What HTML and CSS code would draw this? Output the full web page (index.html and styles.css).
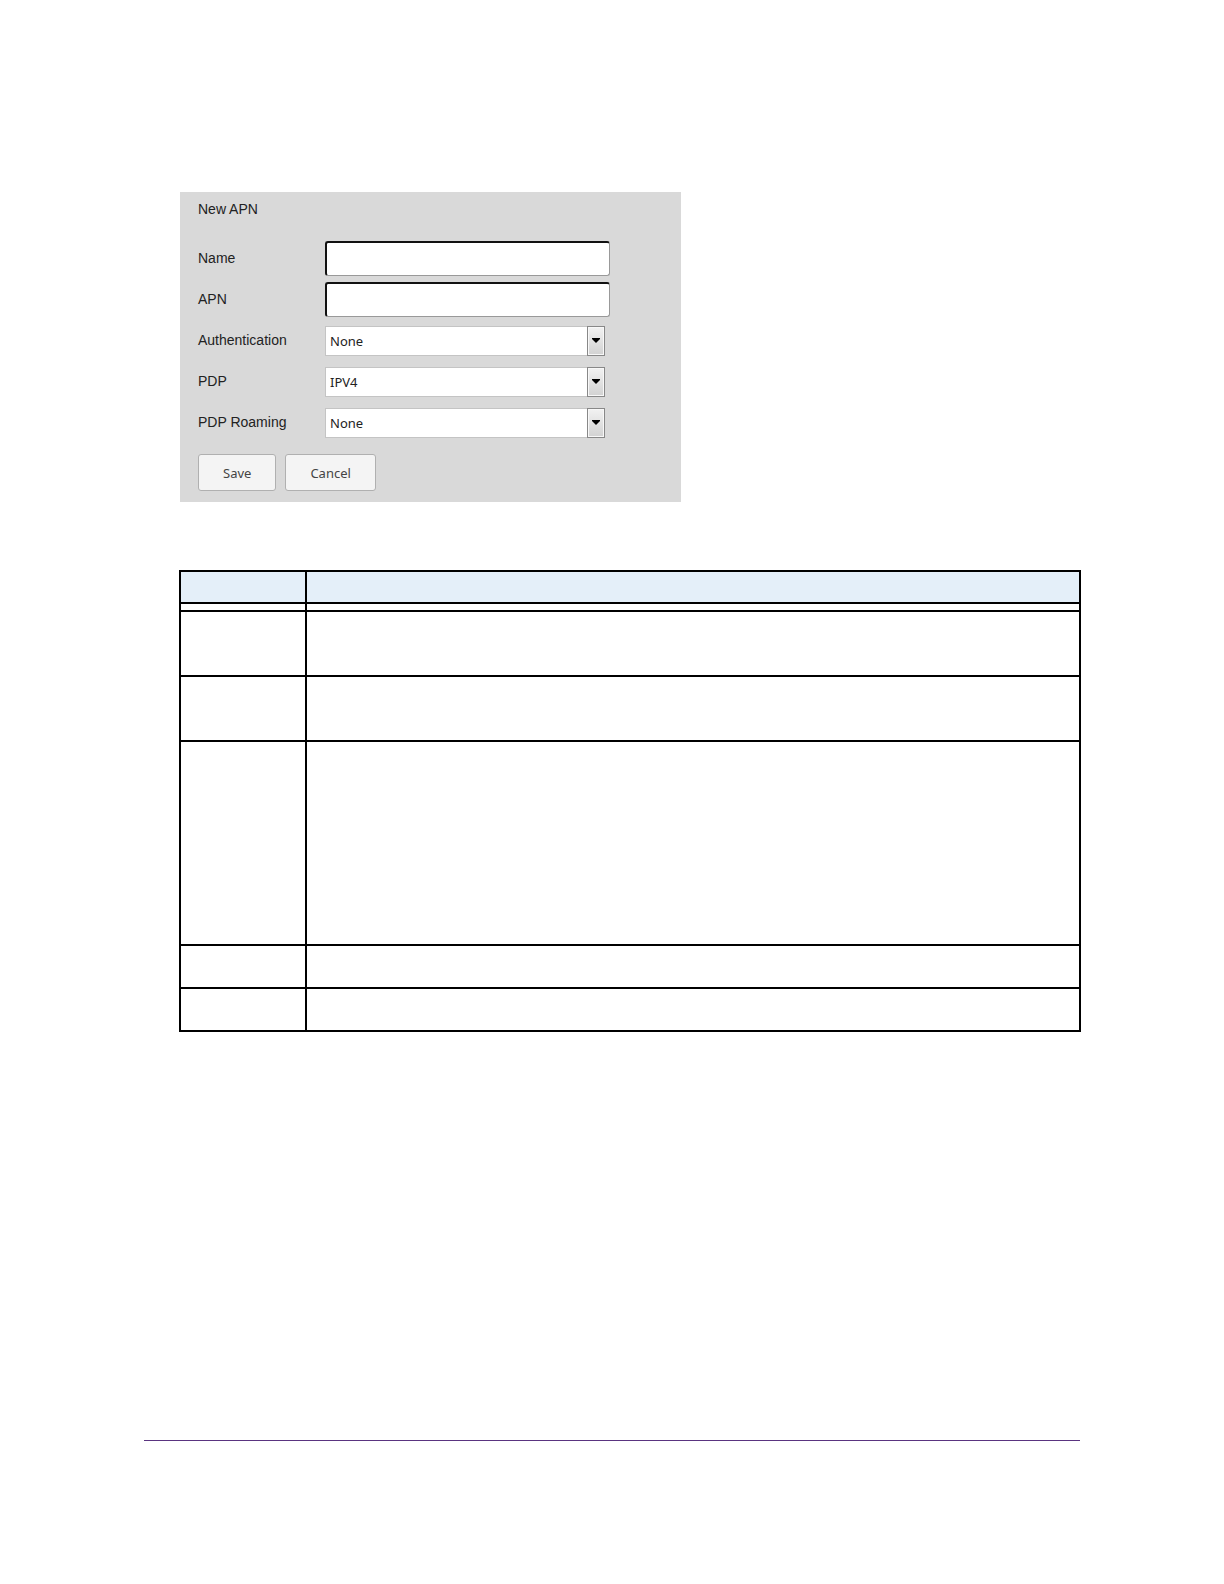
FILE: index.html
```html
<!DOCTYPE html>
<html lang="en">
<head>
    <meta charset="UTF-8">
    <meta name="viewport" content="width=device-width, initial-scale=1.0">
    <title>New APN</title>
    <link rel="stylesheet" href="styles.css">
</head>
<body>

<div class="page">
    <form class="panel">
        <h1>New APN</h1>

        <div class="row">
            <label for="name">Name</label>
            <input type="text" id="name">
        </div>
        <div class="row">
            <label for="apn">APN</label>
            <input type="text" id="apn">
        </div>
        <div class="row">
            <label for="auth">Authentication</label>
            <div class="select">
                <select id="auth">
                    <option>None</option>
                </select>
                <span class="arrow"><svg width="8" height="5" viewBox="0 0 8 5"><path d="M0 0h8v1L4 5 0 1z"/></svg></span>
            </div>
        </div>
        <div class="row">
            <label for="pdp">PDP</label>
            <div class="select">
                <select id="pdp">
                    <option>IPV4</option>
                </select>
                <span class="arrow"><svg width="8" height="5" viewBox="0 0 8 5"><path d="M0 0h8v1L4 5 0 1z"/></svg></span>
            </div>
        </div>
        <div class="row">
            <label for="roaming">PDP Roaming</label>
            <div class="select">
                <select id="roaming">
                    <option>None</option>
                </select>
                <span class="arrow"><svg width="8" height="5" viewBox="0 0 8 5"><path d="M0 0h8v1L4 5 0 1z"/></svg></span>
            </div>
        </div>

        <div class="buttons">
            <button type="button">Save</button>
            <button type="button">Cancel</button>
        </div>
    </form>

    <table class="fields">
        <thead>
            <tr class="head"><th></th><th></th></tr>
            <tr class="gap"><td></td><td></td></tr>
        </thead>
        <tbody>
            <tr class="medium"><td></td><td></td></tr>
            <tr class="medium"><td></td><td></td></tr>
            <tr class="tall"><td></td><td></td></tr>
            <tr class="short"><td></td><td></td></tr>
            <tr class="short"><td></td><td></td></tr>
        </tbody>
    </table>

    <hr>
</div>

</body>
</html>
```
FILE: styles.css
```css
* {
    box-sizing: border-box;
}
body {
    margin: 0;
    background-color: #fff;
    color: #222;
    font-family: "Liberation Sans", Arial, sans-serif;
    font-size: 14px;
}
.page {
    padding: 192px 143px 140px 144px;
}

/* Form */
.panel {
    max-width: 501px;
    margin-left: 36px;
    padding: 8px 18px 11px;
    background-color: #d9d9d9;
}
.panel h1 {
    margin: 0 0 20px;
    font-size: 14px;
    font-weight: normal;
    line-height: 18px;
}
.row {
    display: grid;
    grid-template-columns: 127px 1fr;
    align-items: center;
    height: 41px;
}
.row label {
    padding-bottom: 2px;
}
.row input {
    width: 285px;
    height: 35px;
    padding: 0 4px;
    border: 2px solid #111;
    border-right: 1px solid #999;
    border-bottom: 1px solid #999;
    border-radius: 3px;
    background-color: #fff;
    font: inherit;
}
.select {
    position: relative;
    width: 280px;
    height: 30px;
}
.select select {
    appearance: none;
    display: block;
    width: 100%;
    height: 100%;
    padding: 0 24px 0 4px;
    border: 1px solid #c4c4c4;
    border-radius: 0;
    background-color: #fff;
    color: #222;
    font-family: "Noto Sans", sans-serif;
    font-size: 13px;
}
.arrow {
    position: absolute;
    top: 0;
    right: 0;
    display: flex;
    align-items: center;
    justify-content: center;
    width: 18px;
    height: 100%;
    border: 1px solid #888;
    box-shadow: inset 0 0 0 1px #f8f8f8;
    background: linear-gradient(#f2f2f2, #d2d2d2);
    pointer-events: none;
}
.buttons {
    display: flex;
    gap: 9px;
    margin-top: 11px;
}
.buttons button {
    height: 37px;
    padding: 0 24px;
    border: 1px solid #b0b0b0;
    border-radius: 3px;
    background-color: #f4f4f4;
    color: #444;
    font-family: "Noto Sans", sans-serif;
    font-size: 13px;
    cursor: pointer;
}

/* Field descriptions */
.fields {
    width: calc(100% - 35px);
    margin: 68px 0 0 35px;
    border-collapse: collapse;
    table-layout: fixed;
}
.fields th,
.fields td {
    padding: 0;
    border: 2px solid #000;
}
.fields th:first-child {
    width: 126px;
}
.head {
    height: 32px;
    background-color: #e4eff9;
}
.gap {
    height: 8px;
}
.medium {
    height: 65px;
}
.tall {
    height: 204px;
}
.short {
    height: 43px;
}

hr {
    height: 1px;
    margin: 408px 1px 0 0;
    border: 0;
    background-color: #5a3480;
}
```
